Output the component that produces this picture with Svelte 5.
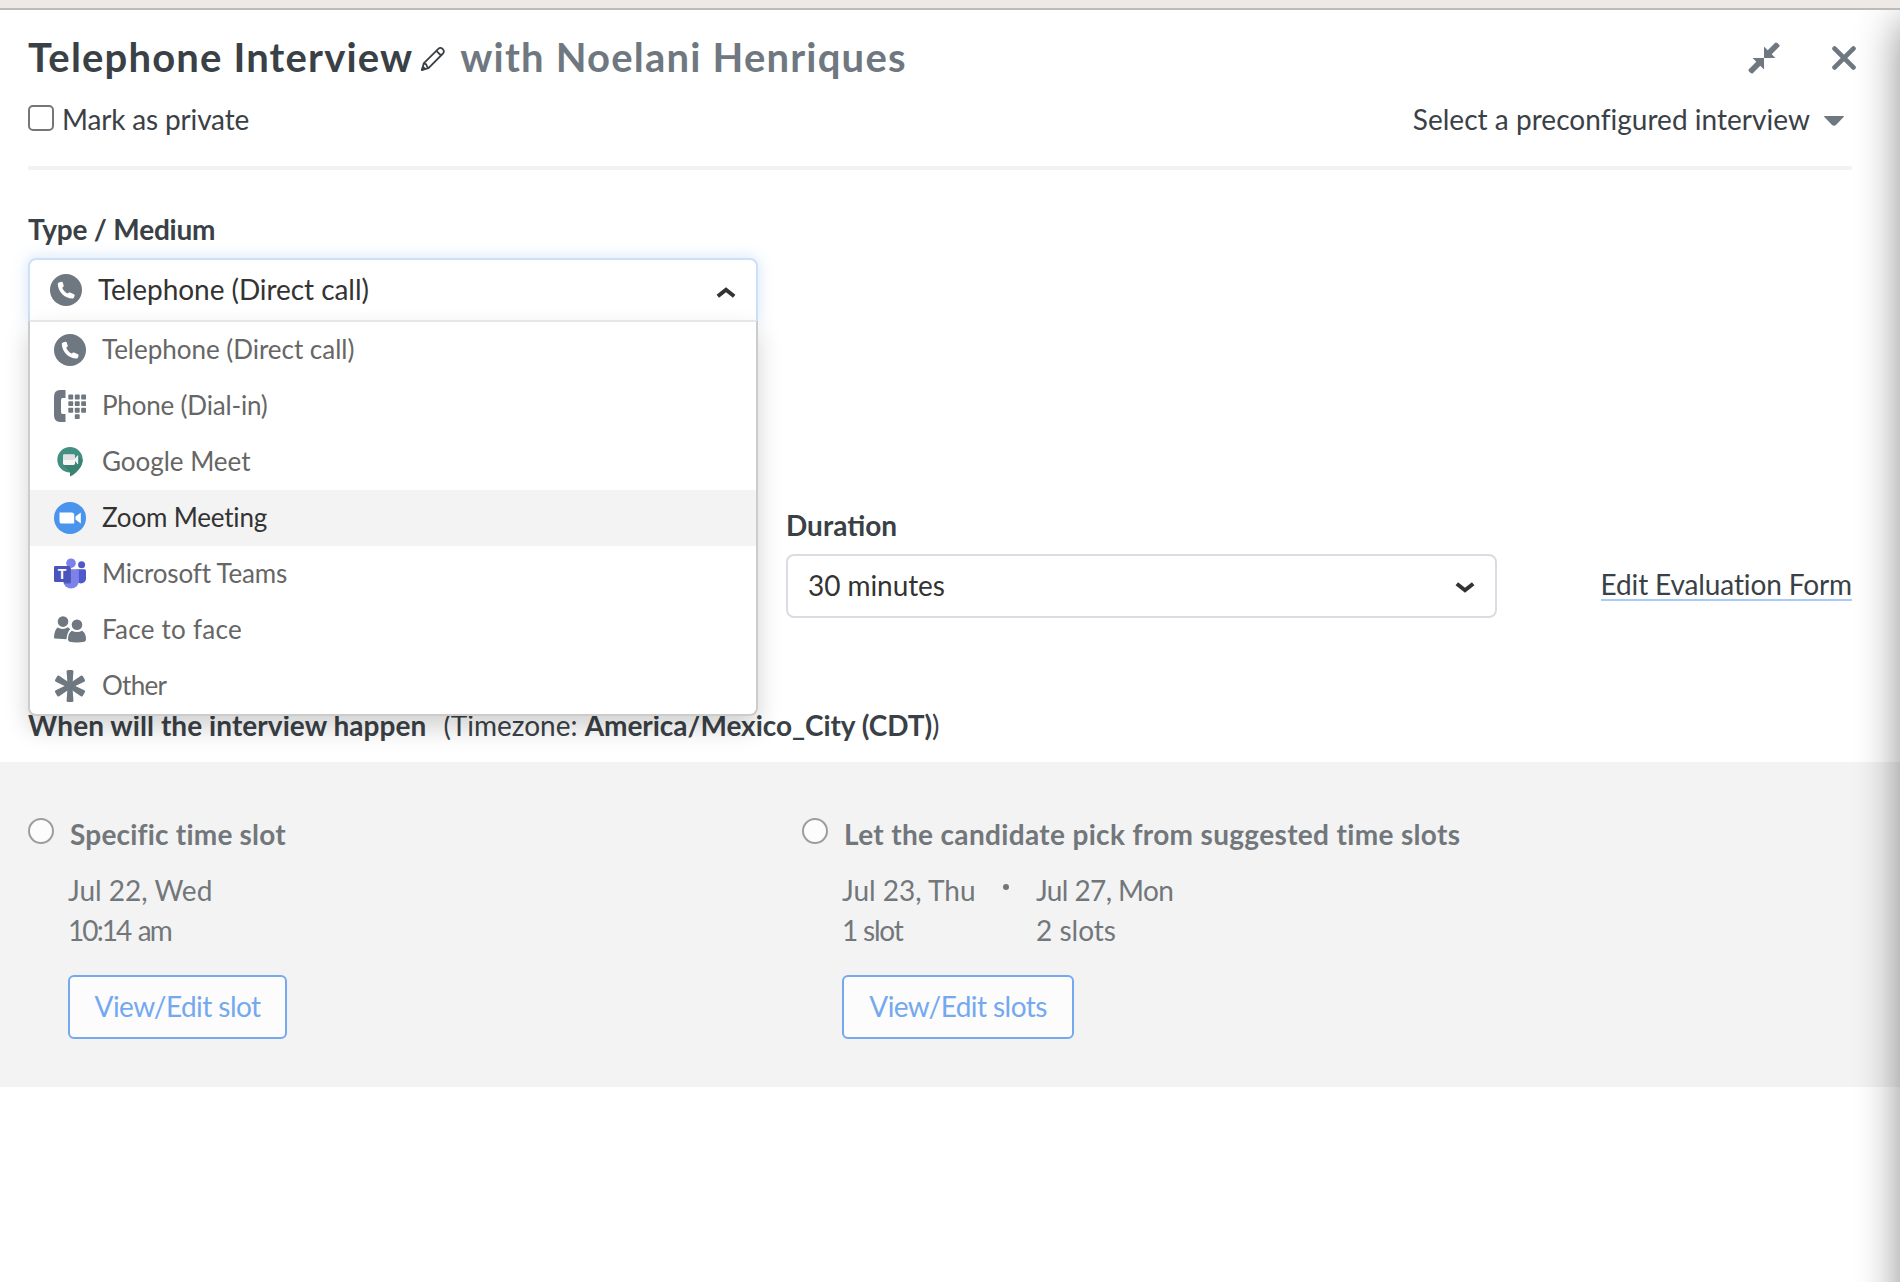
<script lang="ts">
	type Medium = { id: string; label: string };

	const media: Medium[] = [
		{ id: 'call', label: 'Telephone (Direct call)' },
		{ id: 'dialin', label: 'Phone (Dial-in)' },
		{ id: 'meet', label: 'Google Meet' },
		{ id: 'zoom', label: 'Zoom Meeting' },
		{ id: 'teams', label: 'Microsoft Teams' },
		{ id: 'face', label: 'Face to face' },
		{ id: 'other', label: 'Other' }
	];

	let selected = $state(media[0]);
	let highlighted = $state('zoom');
	let open = $state(true);

	function choose(medium: Medium) {
		selected = medium;
		open = false;
	}
</script>

{#snippet icon(id: string)}
	<svg class="icon" viewBox="0 0 32 32" aria-hidden="true">
		{#if id === 'call'}
			<circle cx="16" cy="16" r="16" fill="#6f7880" />
			<path
				fill="#fff"
				d="M9 8.6 11.3 7.8C12 7.6 12.6 8 12.8 8.6L13.7 11.5C13.9 12.1 13.7 12.6 13.2 13L12.2 13.8C13.2 16.2 15 18.2 17.5 19.6L18.6 18.7C19 18.4 19.6 18.3 20.1 18.5L23.9 20.2C24.5 20.5 24.8 21.1 24.6 21.7L24 23.6C23.8 24.3 23.2 24.7 22.5 24.6C14.5 24.3 8.2 17.9 7.8 10.2C7.8 9.4 8.2 8.8 9 8.6Z"
			/>
		{:else if id === 'dialin'}
			<g fill="#6f7880">
				<path d="M6 0H11.5V8H8.5Q7 8 7 10V22Q7 24 8.5 24H11.5V32H6Q0 32 0 25V7Q0 0 6 0Z" />
				{#each [4.6, 11.2, 17.8] as y}
					{#each [14.3, 20.8, 27.2] as x}
						<rect {x} {y} width="4.9" height="4.9" rx="0.8" />
					{/each}
				{/each}
				<rect x="20.8" y="24.2" width="4.9" height="4.9" rx="0.8" />
			</g>
		{:else if id === 'meet'}
			<circle cx="16" cy="13.7" r="12.7" fill="#439082" />
			<path fill="#3b8274" d="M24.2 10 28.7 14Q28.5 22 20 25.8L16 26 9.5 19H20Z" />
			<path fill="#3b8274" d="M16 30.6V25L27 20Q23.5 27 16 30.6Z" />
			<rect x="9" y="8.6" width="12" height="10.4" rx="1.4" fill="#f6f6f6" />
			<path fill="#e0e0e0" d="M9 14V10Q9 8.6 10.4 8.6H19.6Q21 8.6 21 10V14Z" />
			<path fill="#f1f1f1" d="M20 13.8 23.4 9.6Q24.2 9.2 24.2 10V17.6Q24.2 18.4 23.4 18Z" />
		{:else if id === 'zoom'}
			<circle cx="16" cy="16" r="16" fill="#4a94ed" />
			<path fill="#fff" d="M5.5 10.4H17.6Q20.2 10.4 20.2 13V21.6H8Q5.5 21.6 5.5 19Z" />
			<path fill="#fff" d="M21.5 14.4 26.8 10.6V21.4L21.5 17.6Z" />
		{:else if id === 'teams'}
			<circle cx="17" cy="5.2" r="4.8" fill="#7b83eb" />
			<circle cx="27.6" cy="6.8" r="3.5" fill="#5059c9" />
			<path fill="#5059c9" d="M22 11.3H30.5Q32 11.3 32 12.8V20.5A5 5 0 0 1 22 20.5Z" />
			<path fill="#7b83eb" d="M9.3 11.3H23.4Q24.9 11.3 24.9 12.8V22.7A7.8 7.8 0 0 1 9.3 22.7Z" />
			<path fill="#535bb5" d="M9.3 9H15Q17 9 17 10.5V24Q17 25.5 15.5 25.5H9.8Z" />
			<rect y="8" width="16" height="16" rx="1.3" fill="#4b53bc" />
			<text class="teams-mark" x="8" y="20.6">T</text>
		{:else if id === 'face'}
			<g fill="#6f7880">
				<circle cx="9" cy="7.6" r="5.3" />
				<circle cx="23" cy="10.8" r="5.3" />
				<path
					d="M3.5 13.6Q9 16.6 14 13.3L16.2 15.2Q13 18.5 12.5 25.2L1 24.4Q0 24.4 0 23.4Q.3 16.4 3.5 13.6Z"
				/>
				<path
					d="M17.8 16.8Q23 19.2 28.2 16.8Q32 19.1 32 25.6Q32 27.2 30.5 27.8Q23 29.4 15.5 27.8Q14 27.2 14 25.6Q14 19.1 17.8 16.8Z"
				/>
			</g>
		{:else}
			<g fill="#6f7880">
				{#each [0, 60, 120, 180, 240, 300] as angle}
					<path
						d="M13.6 16 12.6 1.5Q12.6 0 14 0H18Q19.4 0 19.4 1.5L18.4 16Z"
						transform="rotate({angle} 16 16)"
					/>
				{/each}
			</g>
		{/if}
	</svg>
{/snippet}

<div class="window">
	<div class="window-bar"></div>
	<main>
		<header>
			<div class="title-row">
				<h1>
					<span class="name">Telephone Interview</span>
					<button type="button" class="bare edit" aria-label="Edit name">
						<svg width="26" height="26" viewBox="0 0 26 26" fill="none" stroke="#3a4146" stroke-width="1.8" stroke-linejoin="round">
							<path d="M2 24 3.7 17.4 18.3 2.8Q20.4.9 22.7 3Q24.9 5.3 23 7.5L8.5 22.2Z" />
							<path d="M3.7 17.4 6.2 18.3 7 20.5 8.5 22.2M16.3 4.8 21.1 9.5" />
							<path d="M2 24 3 20.8 5.2 23Z" fill="#3a4146" />
						</svg>
					</button>
					<span class="with">with Noelani Henriques</span>
				</h1>
				<div class="actions">
					<button type="button" class="bare" aria-label="Collapse">
						<svg width="32" height="32" viewBox="0 0 32 32" fill="#6f7880">
							<path d="M16 16V4.6L19.7 8.3 27.2.8Q28.3 0 29.3.9L31.2 2.8Q32 3.8 31.2 4.8L23.7 12.3 27.4 16Z" />
							<path d="M16 16V27.4L12.3 23.7 4.8 31.2Q3.7 32 2.7 31.1L.8 29.2Q0 28.2.8 27.2L8.3 19.7 4.6 16Z" />
						</svg>
					</button>
					<button type="button" class="bare" aria-label="Close">
						<svg width="24" height="24" viewBox="0 0 24 24" stroke="#6f7880" stroke-width="4.8" stroke-linecap="round">
							<path d="M2.6 2.6 21.4 21.4M21.4 2.6 2.6 21.4" />
						</svg>
					</button>
				</div>
			</div>
			<div class="options-row">
				<label class="private"><span class="checkbox"></span><span>Mark as private</span></label>
				<button type="button" class="bare preset">
					Select a preconfigured interview
					<svg width="20" height="10" viewBox="0 0 20 10" fill="#6f7880">
						<path d="M.4 0H19.6Q20.3.4 19.6 1L12.2 8.8Q10 10.8 7.8 8.8L.4 1Q-.3.4.4 0Z" />
					</svg>
				</button>
			</div>
		</header>

		<section class="medium">
			<h2>Type / Medium</h2>
			<div class="select" class:open>
				<button type="button" class="control" onclick={() => (open = !open)}>
					{@render icon(selected.id)}
					<span class="value">{selected.label}</span>
					<svg class="chevron" width="20" height="12" viewBox="0 0 20 12">
						<path d="M1.8 9.3 10 2.8 18.2 9.3" />
					</svg>
				</button>
				{#if open}
					<ul class="menu">
						{#each media as medium}
							<li>
								<button
									type="button"
									class="option"
									class:highlighted={medium.id === highlighted}
									onmouseenter={() => (highlighted = medium.id)}
									onclick={() => choose(medium)}
								>
									{@render icon(medium.id)}
									<span class={medium.id}>{medium.label}</span>
								</button>
							</li>
						{/each}
					</ul>
				{/if}
			</div>
		</section>

		<section class="length">
			<div class="duration">
				<h2>Duration</h2>
				<button type="button" class="control">
					<span class="value">30 minutes</span>
					<svg class="chevron down" width="20" height="12" viewBox="0 0 20 12">
						<path d="M1.8 2.7 10 9.2 18.2 2.7" />
					</svg>
				</button>
			</div>
			<a href="#evaluation">Edit Evaluation Form</a>
		</section>

		<section class="when">
			<h2>When will the interview happen</h2>
			<p>(Timezone: <b>America/Mexico_City (CDT)</b>)</p>
		</section>

		<section class="slots">
			<div class="slot-choice">
				<span class="radio"></span>
				<div class="slot-body">
					<h3 class="specific">Specific time slot</h3>
					<div class="dates">
						<p>Jul 22, Wed<br /><span class="time">10:14 am</span></p>
					</div>
					<button type="button" class="outline first">View/Edit slot</button>
				</div>
			</div>
			<div class="slot-choice">
				<span class="radio"></span>
				<div class="slot-body">
					<h3 class="suggested">Let the candidate pick from suggested time slots</h3>
					<div class="dates">
						<p class="thu">Jul 23, Thu<br /><span class="one">1 slot</span></p>
						<i class="dot"></i>
						<p class="mon"><span>Jul 27, Mon</span><br />2 slots</p>
					</div>
					<button type="button" class="outline second">View/Edit slots</button>
				</div>
			</div>
		</section>
	</main>
</div>

<style>
	:global(body) {
		margin: 0;
		background: #fff;
	}

	.window {
		height: 1282px;
		overflow: hidden;
		display: flex;
		flex-direction: column;
		font-family: Lato, 'Liberation Sans', sans-serif;
		font-size: 28px;
		line-height: 40px;
		color: #3a4146;
	}

	.window-bar {
		flex: none;
		height: 8px;
		background: #ede9e6;
		border-bottom: 2px solid #bfbab6;
	}

	main {
		position: relative;
		flex: 1;
		overflow: hidden;
	}

	/* shadow cast by the edge of the page underneath */
	main::after {
		content: '';
		position: absolute;
		top: 12px;
		bottom: -60px;
		left: 100%;
		width: 60px;
		box-shadow: 0 0 44px rgba(0, 0, 0, 0.45);
		pointer-events: none;
	}

	h1,
	h2,
	h3,
	p,
	ul {
		margin: 0;
		padding: 0;
		list-style: none;
	}

	h2,
	h3 {
		font-size: 28px;
		font-weight: 700;
	}

	button {
		font: inherit;
		color: inherit;
		cursor: pointer;
	}

	.bare {
		display: flex;
		padding: 0;
		border: 0;
		background: none;
	}

	header {
		box-sizing: border-box;
		height: 160px;
		margin: 0 48px 0 28px;
		padding-top: 22px;
		border-bottom: 4px solid #f2f2f2;
	}

	.title-row,
	.options-row {
		display: flex;
		justify-content: space-between;
	}

	h1 {
		display: flex;
		align-items: center;
		height: 50px;
		font-size: 40px;
		font-weight: 700;
	}

	.name {
		letter-spacing: 1.17px;
	}

	.edit {
		margin: 4px 14px 0 7px;
	}

	.with {
		color: #6f7880;
		letter-spacing: 1.2px;
	}

	.actions {
		display: flex;
		align-items: center;
		gap: 52px;
		height: 52px;
		margin-right: -4px;
	}

	.options-row {
		margin-top: 15px;
	}

	.private {
		display: flex;
		gap: 8px;
		letter-spacing: -0.16px;
	}

	.checkbox {
		box-sizing: border-box;
		width: 26px;
		height: 26px;
		margin-top: 6px;
		border: 2px solid #767676;
		border-radius: 5px;
		background: #fff;
	}

	.preset {
		align-items: center;
		gap: 14px;
		margin-right: 8px;
		height: 40px;
		line-height: 40px;
		letter-spacing: 0.03px;
	}

	.preset svg {
		margin-top: 4px;
	}

	.medium {
		padding: 39px 0 0 28px;
		height: 316px;
		box-sizing: border-box;
	}

	.medium h2 {
		height: 49px;
		letter-spacing: -0.2px;
	}

	.select {
		position: relative;
		width: 730px;
	}

	.control {
		box-sizing: border-box;
		display: flex;
		align-items: center;
		width: 100%;
		height: 64px;
		padding: 0 20px;
		border: 2px solid #d9dde2;
		border-radius: 8px;
		background: #fff;
		color: #333;
		text-align: left;
		letter-spacing: -0.06px;
	}

	.open .control {
		border-color: #cce0f8;
		border-radius: 8px 8px 0 0;
		box-shadow: 0 0 16px rgba(74, 144, 226, 0.25);
	}

	.control .icon {
		margin-right: 16px;
	}

	.value {
		flex: 1;
		padding-bottom: 3px;
	}

	.chevron {
		fill: none;
		stroke: #333;
		stroke-width: 4;
		margin-top: 6px;
	}

	.chevron.down {
		margin-top: 2px;
	}

	.icon {
		flex: none;
		width: 32px;
		height: 32px;
	}

	.teams-mark {
		font:
			700 14px 'Liberation Sans',
			sans-serif;
		fill: #fff;
		text-anchor: middle;
	}

	.menu {
		box-sizing: border-box;
		position: absolute;
		z-index: 2;
		top: 62px;
		left: 0;
		width: 100%;
		border: 2px solid #ccc;
		border-top-color: #e6e6e6;
		border-radius: 0 0 8px 8px;
		background: #fff;
		box-shadow: 0 12px 24px rgba(0, 0, 0, 0.175);
	}

	.menu li:last-child .option {
		border-radius: 0 0 6px 6px;
	}

	.option {
		display: flex;
		align-items: center;
		gap: 16px;
		width: 100%;
		height: 56px;
		padding: 0 24px;
		border: 0;
		background: none;
		font-size: 26px;
		line-height: 36px;
		color: #666;
		text-align: left;
		letter-spacing: -0.18px;
	}

	.option span {
		padding-bottom: 2px;
	}

	.option .call,
	.option .meet {
		letter-spacing: -0.02px;
	}

	.option .face {
		letter-spacing: 0.25px;
	}

	.option .other {
		letter-spacing: -0.7px;
	}

	.option.highlighted {
		background: #f3f3f3;
		color: #333;
	}

	.length {
		display: flex;
		justify-content: space-between;
		box-sizing: border-box;
		height: 220px;
		padding: 19px 48px 0 786px;
	}

	.duration {
		width: 711px;
	}

	.duration h2 {
		height: 49px;
	}

	.length a {
		height: 28px;
		margin-top: 66px;
		border-bottom: 2px solid #a9cbf8;
		line-height: 26px;
		color: inherit;
		text-decoration: none;
		letter-spacing: -0.12px;
	}

	.when {
		display: flex;
		gap: 17px;
		box-sizing: border-box;
		height: 56px;
		padding: 0 28px;
		line-height: 38px;
	}

	.when h2 {
		letter-spacing: 0.06px;
	}

	.when b {
		letter-spacing: -0.05px;
	}

	.slots {
		display: grid;
		grid-template-columns: 774px 1fr;
		box-sizing: border-box;
		height: 325px;
		padding: 51px 28px 0;
		background: #f3f3f3;
		color: #72777b;
	}

	.slot-choice {
		display: flex;
		gap: 14px;
	}

	.radio {
		box-sizing: border-box;
		flex: none;
		width: 26px;
		height: 26px;
		margin-top: 5px;
		border: 2px solid #9d9d9d;
		border-radius: 50%;
		background: #fcfcfc;
	}

	h3 {
		margin: 0 0 16px 2px;
		padding-top: 1px;
	}

	.specific {
		letter-spacing: 0.2px;
	}

	.suggested {
		letter-spacing: 0.34px;
	}

	.dates {
		display: flex;
		height: 80px;
	}

	.time {
		letter-spacing: -1.9px;
		word-spacing: 2px;
	}

	.one {
		letter-spacing: -1.2px;
	}

	.thu {
		width: 161px;
	}

	.mon span {
		letter-spacing: -0.6px;
	}

	.dot {
		width: 6px;
		height: 6px;
		margin: 14px 27px 0 0;
		border-radius: 50%;
		background: #72777b;
	}

	.outline {
		box-sizing: border-box;
		height: 64px;
		margin-top: 25px;
		padding: 0 0 2px;
		border: 2px solid #74a8ef;
		border-radius: 6px;
		background: #fcfcfc;
		color: #74a8ef;
		letter-spacing: -0.56px;
	}

	.first {
		width: 219px;
	}

	.second {
		width: 232px;
	}
</style>
